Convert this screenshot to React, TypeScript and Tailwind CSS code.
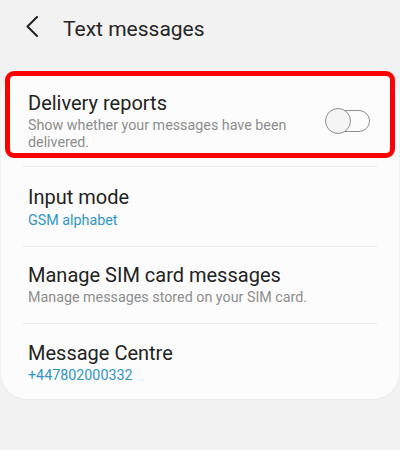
const Toggle = () => (
  <div className="relative h-[22px] w-[44px] shrink-0">
    <div className="absolute inset-0 rounded-full border-[1.5px] border-[#8f8f8f]" />
    <div className="absolute left-[-1px] top-[-2px] h-[26px] w-[26px] rounded-full border-[1.5px] border-[#8f8f8f] bg-[#f5f5f5]" />
  </div>
);

type RowProps = {
  title: string;
  summary?: string;
  value?: string;
  toggle?: boolean;
  divider?: boolean;
  pad: string;
  gap: string;
};

const Row = ({ title, summary, value, toggle, divider = true, pad, gap }: RowProps) => (
  <div>
    <div className={`flex items-center gap-4 pl-[27px] pr-[29px] ${pad}`}>
      <div className="min-w-0 flex-1">
        <p className="text-[20px] leading-[24px] text-[#232323]">{title}</p>
        {summary && <p className={`${gap} text-[14.3px] leading-[17px] text-[#8e8e8e]`}>{summary}</p>}
        {value && <p className={`${gap} text-[14.3px] leading-[17px] text-[#2f97c8]`}>{value}</p>}
      </div>
      {toggle && <Toggle />}
    </div>
    {divider && <div className="mx-[22px] h-px bg-[#ececec]" />}
  </div>
);

export default function App() {
  return (
    <div className="h-[450px] w-[400px] overflow-hidden bg-[#f2f2f2] font-['Roboto',sans-serif]">
      <header className="flex h-[72px] items-start pt-[16px]">
        <svg className="ml-[26px]" width="13" height="21" viewBox="0 0 13 21" fill="none" stroke="#222" strokeWidth="2" strokeLinecap="round" strokeLinejoin="round">
          <path d="M11 1 L1.5 10.5 L11 20" />
        </svg>
        <h1 className="ml-[24px] mt-[-1px] text-[21px] leading-[28px] text-[#262626]">Text messages</h1>
      </header>

      <div className="relative mx-[1px] rounded-[26px] bg-[#fcfcfc] shadow-[0_1px_1px_rgba(0,0,0,0.04)]">
        <Row title="Delivery reports" summary="Show whether your messages have been delivered." toggle pad="pt-[19px] pb-[15px]" gap="mt-[2px]" />
        <Row title="Input mode" value="GSM alphabet" pad="pt-[18px] pb-[17px]" gap="mt-[3px]" />
        <Row title="Manage SIM card messages" summary="Manage messages stored on your SIM card." pad="pt-[16px] pb-[17px]" gap="mt-[2px]" />
        <Row title="Message Centre" value="+447802000332" divider={false} pad="pt-[17px] pb-[15px]" gap="mt-[2px]" />

        <div className="pointer-events-none absolute left-[4px] right-[4px] top-[-1px] h-[87px] rounded-[9px] border-[5px] border-[#ff0000]" />
      </div>
    </div>
  );
}
